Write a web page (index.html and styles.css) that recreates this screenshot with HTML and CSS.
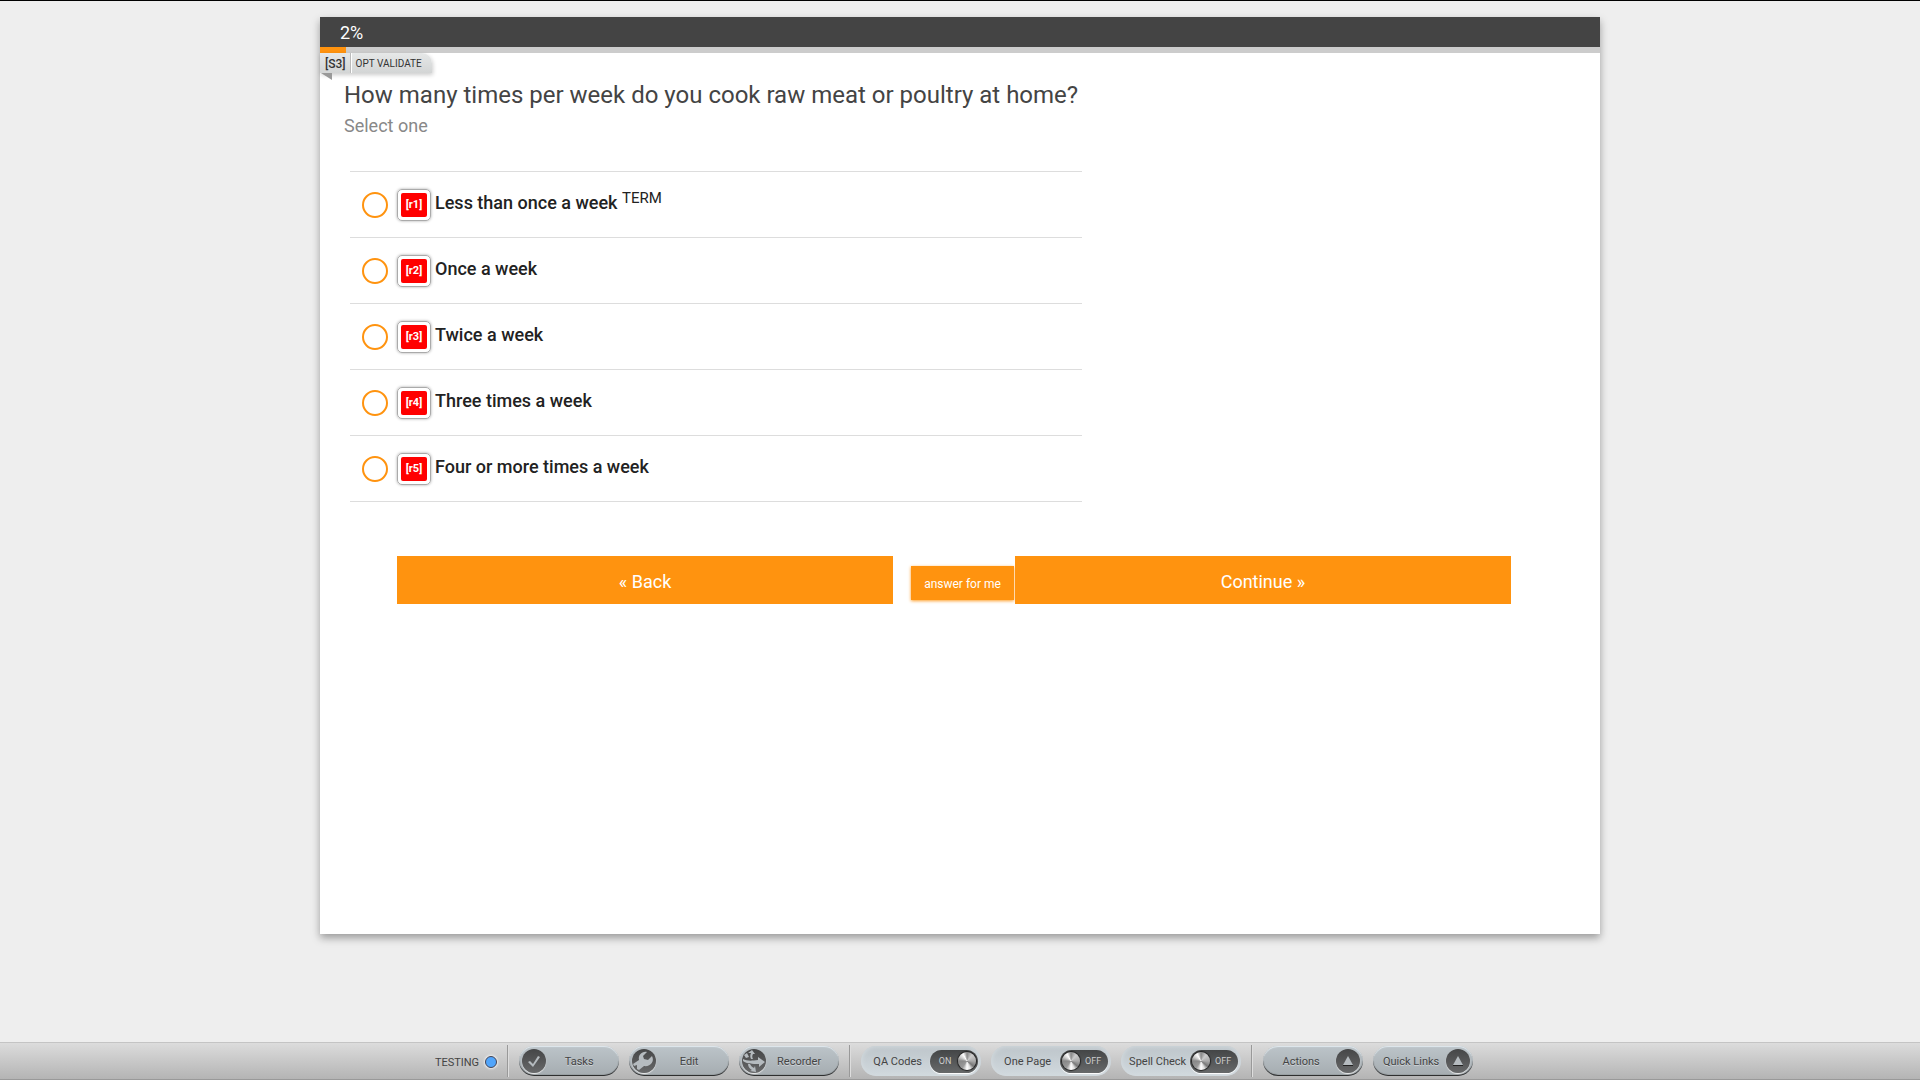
FILE: index.html
```html
<!DOCTYPE html>
<html lang="en">
<head>
<meta charset="utf-8">
<meta name="viewport" content="width=device-width, initial-scale=1">
<title>Survey</title>
<link rel="stylesheet" href="styles.css">
</head>
<body>
<form class="page">
  <main class="survey">
    <header class="survey-header">2%</header>
    <div class="progress"><div class="progress-fill" style="width:2%"></div></div>
    <div class="tag"><span class="tag-id">[S3]</span><span class="tag-note">OPT VALIDATE</span></div>
    <section class="question">
      <h1 class="question-title" id="question">How many times per week do you cook raw meat or poultry at home?</h1>
      <p class="question-hint">Select one</p>
      <div class="answers" role="radiogroup" aria-labelledby="question">
        <label class="answer"><input class="radio" type="radio" name="s3"><span class="code"><span class="code-text">[r1]</span></span><span class="answer-text">Less than once a week <sup class="term">TERM</sup></span></label>
        <label class="answer"><input class="radio" type="radio" name="s3"><span class="code"><span class="code-text">[r2]</span></span><span class="answer-text">Once a week</span></label>
        <label class="answer"><input class="radio" type="radio" name="s3"><span class="code"><span class="code-text">[r3]</span></span><span class="answer-text">Twice a week</span></label>
        <label class="answer"><input class="radio" type="radio" name="s3"><span class="code"><span class="code-text">[r4]</span></span><span class="answer-text">Three times a week</span></label>
        <label class="answer"><input class="radio" type="radio" name="s3"><span class="code"><span class="code-text">[r5]</span></span><span class="answer-text">Four or more times a week</span></label>
      </div>
    </section>
    <div class="nav">
      <button class="nav-button nav-back" type="button">« Back</button>
      <button class="auto-button" type="button">answer for me</button>
      <button class="nav-button" type="button">Continue »</button>
    </div>
  </main>
  <footer class="toolbar">
    <div class="group status">TESTING<span class="dot"></span></div>
    <div class="group">
      <button class="pill" type="button"><span class="disc"><svg class="icon" viewBox="0 0 24 24"><path d="M6 13l2-1 3 3 5-8 2 1-7 10z"/></svg></span><span class="pill-text">Tasks</span></button>
      <button class="pill" type="button"><span class="disc"><svg class="icon" viewBox="0 0 24 24"><path d="M20 7l-4 4-4-1-1-3 4-4C10 2 6 6 7 11l-6 4 1 2 3-1v4l2 1 5-4c6 1 11-4 8-10z"/></svg></span><span class="pill-text">Edit</span></button>
      <button class="pill" type="button"><span class="disc"><svg class="icon" viewBox="0 0 24 24"><path d="M1 10c4 2 8 2 15 1V8l7 5-6 5v-3c-7 0-12 0-16-3zM9 10c-1-2-1-4 0-6H6l4-3 3 4h-2c-1 2-1 3 0 5zM8 15c1 2 2 3 4 4l1-2 1 6-6-1 2-1c-2-1-4-3-4-6z"/><path d="M2 6l3-2 2 4-3 1z"/></svg></span><span class="pill-text">Recorder</span></button>
    </div>
    <div class="group">
      <label class="option"><span class="option-text">QA Codes</span><input class="switch-input" type="checkbox" checked><span class="switch"><span class="switch-text">ON</span><span class="knob"></span></span></label>
      <label class="option"><span class="option-text">One Page</span><input class="switch-input" type="checkbox"><span class="switch"><span class="knob"></span><span class="switch-text">OFF</span></span></label>
      <label class="option"><span class="option-text">Spell Check</span><input class="switch-input" type="checkbox"><span class="switch"><span class="knob"></span><span class="switch-text">OFF</span></span></label>
    </div>
    <div class="group">
      <button class="pill" type="button"><span class="pill-text">Actions</span><span class="disc"><svg class="icon" viewBox="0 0 24 24"><path d="M12 7l5 9H7z"/><path class="icon-shade" d="M7 16h10v1H7z"/></svg></span></button>
      <button class="pill" type="button"><span class="pill-text">Quick Links</span><span class="disc"><svg class="icon" viewBox="0 0 24 24"><path d="M12 7l5 9H7z"/><path class="icon-shade" d="M7 16h10v1H7z"/></svg></span></button>
    </div>
  </footer>
</form>
</body>
</html>
```
FILE: styles.css
```css
* { box-sizing: border-box; }
body {
  margin: 0;
  border-top: 1px solid #000;
  background: #eee;
  color: #444;
  font-family: Roboto, "Liberation Sans", sans-serif;
}
button { font-family: inherit; border: 0; cursor: pointer; }
.page {
  display: flex;
  flex-direction: column;
  min-height: calc(100vh - 1px);
}
.survey {
  width: 100%;
  max-width: 1280px;
  margin: 16px auto 108px;
  flex: 1;
  background: #fff;
  box-shadow: 0 4px 8px rgba(0, 0, 0, .35);
}
.survey-header {
  height: 30px;
  padding: 0 20px;
  background: #444;
  color: #fff;
  font-size: 18px;
  line-height: 32px;
}
.progress { height: 6px; background: #ccc; }
.progress-fill { height: 100%; background: #ff930f; }

.tag {
  position: relative;
  display: flex;
  width: max-content;
  height: 20px;
  border-radius: 0 10px 0 0;
  background: linear-gradient(#e6e8e8, #d3d5d5);
  box-shadow: 1px 2px 4px rgba(0, 0, 0, .2);
  color: #333;
  line-height: 22px;
}
.tag::after {
  content: "";
  position: absolute;
  top: 100%;
  left: 1px;
  border-top: 7px solid #999;
  border-left: 11px solid transparent;
}
.tag-id {
  padding: 0 4px 0 5px;
  border-right: 1px solid #bbb;
  font-size: 12px;
  font-weight: 500;
}
.tag-note {
  padding: 0 10px 0 4px;
  border-left: 1px solid #fff;
  font-size: 10px;
}

.question { padding: 6px 24px 0; }
.question-title {
  margin: 0;
  font-size: 24px;
  font-weight: 400;
  line-height: 32px;
}
.question-hint {
  margin: 0;
  color: #888;
  font-size: 18px;
  line-height: 30px;
}
.answers {
  max-width: 732px;
  margin: 30px 6px 0;
  border-bottom: 1px solid #ddd;
}
.answer {
  display: flex;
  align-items: center;
  min-height: 66px;
  padding: 0 12px;
  border-top: 1px solid #ddd;
  color: #222;
  font-size: 18px;
  font-weight: 500;
}
.radio {
  flex: none;
  appearance: none;
  width: 26px;
  height: 26px;
  margin: 0 9px 0 0;
  border: 2px solid #ff930f;
  border-radius: 50%;
}
.radio:checked { background: #ff930f; box-shadow: inset 0 0 0 4px #fff; }
.code {
  flex: none;
  width: 34px;
  height: 32px;
  margin-right: 4px;
  padding: 3px;
  border: 1px solid #aaa;
  border-radius: 5px;
  box-shadow: 0 0 3px rgba(0, 0, 0, .35);
}
.code-text {
  display: block;
  border-radius: 2px;
  background: #f00;
  color: #fff;
  font-size: 11px;
  font-weight: 700;
  line-height: 24px;
  text-align: center;
}
.answer-text { padding-bottom: 4px; line-height: 22px; }
.term { font-size: 15px; font-weight: 400; line-height: 0; vertical-align: 6px; }

.nav {
  display: flex;
  align-items: center;
  margin-top: 54px;
  padding: 0 89px 0 77px;
}
.nav-button {
  flex: 1;
  height: 48px;
  padding: 2px 0 0;
  background: #ff930f;
  color: #fff;
  font-size: 18px;
}
.nav-back { margin-right: 18px; }
.auto-button {
  height: 34px;
  margin: 6px 1px 0 0;
  padding: 2px 13px 0;
  background: #ff930f;
  box-shadow: 0 1px 3px rgba(255, 147, 15, .9);
  color: #fff;
  font-size: 12px;
}

.toolbar {
  display: flex;
  justify-content: center;
  min-height: 38px;
  padding: 2px 2px 1px 0;
  border-top: 1px solid #c4c4c4;
  border-bottom: 1px solid #999;
  background: linear-gradient(#dcdcdc, #b4b4b4);
  color: #444;
  font-size: 11px;
}
.group {
  display: flex;
  align-items: center;
  gap: 10px;
  height: 32px;
  padding: 0 10px 0 11px;
  border-left: 1px solid #999;
  box-shadow: inset 1px 0 #ddd;
}
.status { gap: 6px; padding: 2px 10px 0 0; border-left: 0; box-shadow: none; }
.dot {
  width: 12px;
  height: 12px;
  border: 1px solid #445;
  border-radius: 50%;
  background: #51a5fb;
  box-shadow: 0 0 2px 1px #eee;
}
.pill {
  display: flex;
  align-items: center;
  width: 100px;
  height: 30px;
  padding: 0 3px;
  border-radius: 15px;
  background: linear-gradient(#bcc4c9, #a5acb0);
  box-shadow: inset 0 1px 1px #e2eaef, inset 0 -1px 1px #222;
  color: #444;
  font-size: 11px;
}
.pill-text { flex: 1; text-align: center; text-shadow: 0 1px #ccd2d6; }
.disc + .pill-text { padding-right: 4px; }
.disc {
  flex: none;
  width: 24px;
  height: 24px;
  border-radius: 50%;
  background: linear-gradient(#454647, #68696a);
  box-shadow: 0 1px 1px #eee;
}
.icon { display: block; width: 24px; height: 24px; fill: #b5bbbf; }
.icon-shade { fill: #222; }
.option {
  position: relative;
  display: flex;
  align-items: center;
  width: 120px;
  height: 30px;
  padding: 0 3px 0 0;
  border-radius: 15px;
  background: linear-gradient(#bdc5ca, #d1d9de);
  box-shadow: inset 0 0 4px 1px #d3dade;
}
.option-text { flex: 1; padding-left: 4px; text-align: center; }
.switch-input { position: absolute; opacity: 0; }
.switch {
  display: flex;
  align-items: center;
  width: 48px;
  height: 23px;
  padding: 0 2px;
  border-radius: 12px;
  background: linear-gradient(#444647, #67696a);
  box-shadow: 0 1px 1px #fff;
}
.switch-text { flex: 1; color: #ccc; font-size: 9px; text-align: center; }
.knob {
  flex: none;
  width: 18px;
  height: 18px;
  border-radius: 50%;
  background: conic-gradient(#888, #ccc 40deg, #aaa 90deg, #777 130deg, #ddd 155deg, #fff 180deg, #999 215deg, #888 270deg, #ccc 300deg, #fff 330deg, #888);
  box-shadow: 0 0 1px 1px #222;
}
```
